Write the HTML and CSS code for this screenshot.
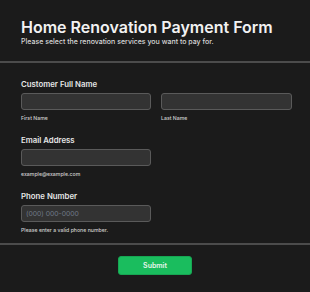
FILE: index.html
```html
<!DOCTYPE html>
<html>
<head>
<meta charset="utf-8">
<link rel="stylesheet" href="styles.css">
</head>
<body>
<div class="page">
  <header class="header">
    <h1 class="title">Home Renovation Payment Form</h1>
    <p class="subtitle">Please select the renovation services you want to pay for.</p>
  </header>
  <section class="form">
    <div class="group">
      <div class="label">Customer Full Name</div>
      <div class="row">
        <div class="field">
          <input class="input" type="text">
          <div class="hint">First Name</div>
        </div>
        <div class="field">
          <input class="input" type="text">
          <div class="hint">Last Name</div>
        </div>
      </div>
    </div>
    <div class="group">
      <div class="label">Email Address</div>
      <div class="row">
        <div class="field">
          <input class="input" type="text">
          <div class="hint">example@example.com</div>
        </div>
      </div>
    </div>
    <div class="group">
      <div class="label">Phone Number</div>
      <div class="row">
        <div class="field">
          <input class="input" type="text" placeholder="(000) 000-0000">
          <div class="hint">Please enter a valid phone number.</div>
        </div>
      </div>
    </div>
  </section>
  <footer class="footer">
    <button class="submit">Submit</button>
  </footer>
</div>
</body>
</html>
```
FILE: styles.css
```css
* { box-sizing: border-box; }
html, body { margin: 0; padding: 0; }
body {
  background: #1b1b1b;
  font-family: Inter, "Noto Sans", sans-serif;
  color: #ffffff;
  width: 310px;
  height: 292px;
  overflow: hidden;
}
.header {
  padding: 17px 21px 14px;
  border-bottom: 2px solid #4c4c4c;
}
.title {
  margin: 0;
  font-size: 16px;
  line-height: 20px;
  font-weight: 600;
  color: #f2f2f2;
}
.subtitle {
  margin: 0;
  font-size: 7px;
  line-height: 10px;
  font-weight: 500;
  color: #d8d8d8;
}
.form {
  padding: 16px 18px 9px 21px;
  border-bottom: 2px solid #4c4c4c;
}
.group { margin-bottom: 13px; }
.group:last-child { margin-bottom: 0; }
.label {
  font-size: 7.8px;
  line-height: 10px;
  font-weight: 600;
  color: #e6e6e6;
  margin-bottom: 4px;
}
.row {
  display: grid;
  grid-template-columns: 130px 131px;
  column-gap: 10px;
}
.input {
  display: block;
  width: 100%;
  height: 16.5px;
  margin: 0;
  background: #333333;
  border: 1px solid #5a5a5a;
  border-radius: 3px;
  padding: 0 4px;
  font-family: Inter, sans-serif;
  font-size: 6.8px;
  color: #ddd;
  outline: none;
}
.input::placeholder { color: #6f7887; }
.hint {
  margin-top: 4.5px;
  font-size: 5.2px;
  line-height: 8px;
  font-weight: 500;
  color: #d0d0d0;
}
.footer {
  display: flex;
  justify-content: center;
  padding-top: 11px;
}
.submit {
  width: 74px;
  height: 19px;
  background: #1abd5e;
  border: 1px solid #17a653;
  border-radius: 3px;
  color: #e8f5ec;
  font-family: Inter, sans-serif;
  font-size: 7px;
  font-weight: 600;
  padding: 0;
}
```
